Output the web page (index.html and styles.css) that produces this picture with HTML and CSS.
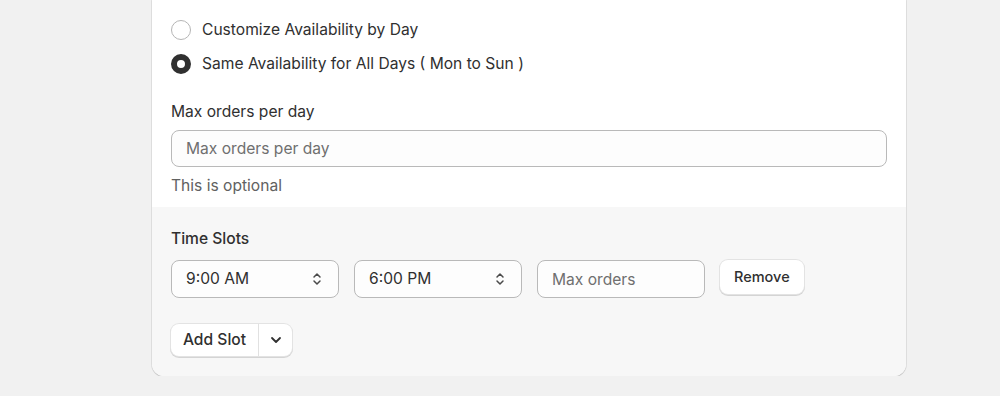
FILE: index.html
```html
<!DOCTYPE html>
<html lang="en">

<head>
    <meta charset="UTF-8">
    <meta name="viewport" content="width=device-width, initial-scale=1.0">
    <title>Availability</title>
    <link rel="stylesheet" href="styles.css">
</head>

<body>
    <div class="page">
        <div class="card">
            <div class="card-main">
                <div class="radio-list">
                    <label class="radio-row">
                        <span class="radio"></span>
                        Customize Availability by Day
                    </label>
                    <label class="radio-row">
                        <span class="radio checked"></span>
                        Same Availability for All Days ( Mon to Sun )
                    </label>
                </div>

                <div class="field">
                    <label class="field-label" for="maxPerDay">Max orders per day</label>
                    <input class="text-input" type="text" id="maxPerDay" placeholder="Max orders per day">
                    <div class="help-text">This is optional</div>
                </div>
            </div>

            <div class="card-section">
                <div class="section-title">Time Slots</div>
                <div class="slot-row">
                    <div class="select">
                        <span>9:00 AM</span>
                        <svg width="10" height="14" viewBox="0 0 10 14" fill="none" stroke="#4a4a4a" stroke-width="1.5" stroke-linecap="round" stroke-linejoin="round">
                            <path d="M2 5l3-3 3 3" />
                            <path d="M2 9l3 3 3-3" />
                        </svg>
                    </div>
                    <div class="select">
                        <span>6:00 PM</span>
                        <svg width="10" height="14" viewBox="0 0 10 14" fill="none" stroke="#4a4a4a" stroke-width="1.5" stroke-linecap="round" stroke-linejoin="round">
                            <path d="M2 5l3-3 3 3" />
                            <path d="M2 9l3 3 3-3" />
                        </svg>
                    </div>
                    <input class="text-input slot-input" type="text" placeholder="Max orders">
                    <button class="btn" type="button">Remove</button>
                </div>

                <div class="split-btn">
                    <button class="split-main" type="button">Add Slot</button>
                    <button class="split-toggle" type="button">
                        <svg width="12" height="8" viewBox="0 0 12 8" fill="none" stroke="#303030" stroke-width="1.8" stroke-linecap="round" stroke-linejoin="round">
                            <path d="M2 2l4 4 4-4" />
                        </svg>
                    </button>
                </div>
            </div>
        </div>
    </div>
</body>

</html>
```

FILE: styles.css
```css
body {
    margin: 0;
    background: #f1f1f1;
    font-family: Inter, "Open Sans", Arial, sans-serif;
    font-size: 15.6px;
    line-height: 20px;
    color: #303030;
}

.page {
    padding-left: 152px;
}

.card {
    width: 754px;
    background: #fff;
    border-radius: 0 0 12px 12px;
    overflow: hidden;
    box-shadow: 0 0 0 1px rgba(0, 0, 0, 0.07), 0 1px 1px rgba(0, 0, 0, 0.14);
}

.card-main {
    padding: 20px 19px 11px 19px;
}

.radio-list {
    display: flex;
    flex-direction: column;
    gap: 14px;
}

.radio-row {
    display: flex;
    align-items: center;
    gap: 11px;
}

.radio {
    width: 20px;
    height: 20px;
    box-sizing: border-box;
    border: 1px solid #b5b5b5;
    border-radius: 50%;
    background: #fff;
}

.radio.checked {
    border: 6px solid #303030;
}

.field {
    margin-top: 28px;
    display: flex;
    flex-direction: column;
}

.field-label {
    margin-bottom: 8px;
}

.text-input {
    height: 37px;
    box-sizing: border-box;
    border: 1px solid #b9b9b9;
    border-radius: 8px;
    background: #fdfdfd;
    padding: 0 14px;
    font: inherit;
    color: #303030;
}

.text-input::placeholder {
    color: #6f6f6f;
}

.help-text {
    margin-top: 9px;
    color: #616161;
}

.card-section {
    background: #f7f7f7;
    padding: 22px 19px 20px;
}

.section-title {
    font-weight: 550;
}

.slot-row {
    display: flex;
    align-items: flex-start;
    gap: 15px;
    margin-top: 11px;
}

.select {
    width: 168px;
    height: 38px;
    box-sizing: border-box;
    border: 1px solid #b9b9b9;
    border-radius: 8px;
    background: #fdfdfd;
    display: flex;
    align-items: center;
    justify-content: space-between;
    padding: 0 16px 0 14px;
}

.slot-input {
    width: 168px;
    height: 38px;
}

.btn {
    height: 34px;
    padding: 0 14px;
    border: none;
    border-radius: 8px;
    background: #fff;
    font: inherit;
    font-size: 14.5px;
    font-weight: 550;
    color: #303030;
    box-shadow: 0 0 0 1px #e3e3e3, 0 1px 0 1px #d4d4d4;
}

.split-btn {
    margin-top: 26px;
    display: inline-flex;
    height: 32px;
    border-radius: 8px;
    background: #fff;
    box-shadow: 0 0 0 1px #e3e3e3, 0 1px 0 1px #d4d4d4;
}

.split-main {
    width: 88px;
    border: none;
    background: none;
    border-right: 1px solid #e1e1e1;
    font: inherit;
    font-weight: 550;
    color: #303030;
}

.split-toggle {
    width: 33px;
    border: none;
    background: none;
    display: flex;
    align-items: center;
    justify-content: center;
}
```
